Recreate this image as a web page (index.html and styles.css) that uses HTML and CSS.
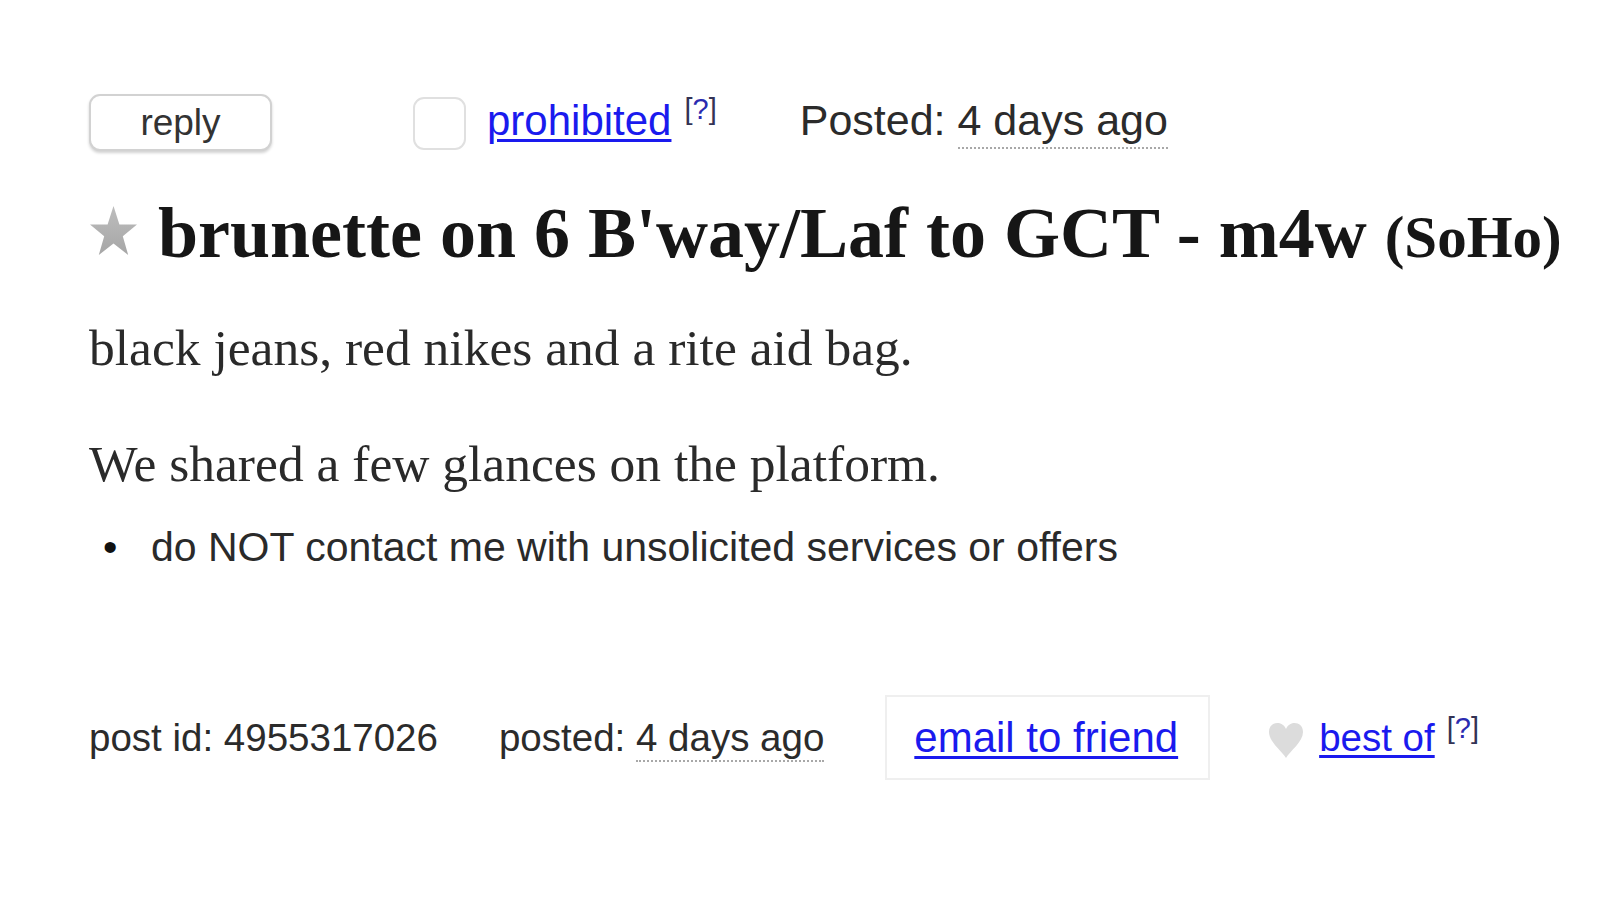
FILE: index.html
```html
<!DOCTYPE html>
<html lang="en">
<head>
<meta charset="utf-8">
<title>brunette on 6 B'way/Laf to GCT - m4w (SoHo)</title>
<link rel="stylesheet" href="styles.css">
</head>
<body>
<div class="page">
  <div class="topbar">
    <button class="reply-btn">reply</button>
    <span class="flagbox"></span>
    <a class="prohibited" href="#">prohibited</a>
    <sup class="help">[<a href="#">?</a>]</sup>
    <span class="posted">Posted: <time class="ago">4 days ago</time></span>
  </div>

  <div class="title-row">
    <svg class="star" viewBox="0 0 49 56" width="49" height="56" aria-hidden="true">
      <defs>
        <linearGradient id="sg" x1="0" y1="0" x2="0" y2="1">
          <stop offset="0" stop-color="#bdbdbd"/>
          <stop offset="1" stop-color="#a6a6a6"/>
        </linearGradient>
      </defs>
      <polygon points="24.5,2 30.4,20.6 48,20.6 33.8,32.3 39.2,51 24.5,39.6 9.8,51 15.2,32.3 1,20.6 18.6,20.6" fill="url(#sg)"/>
    </svg>
    <h1 class="title">brunette on 6 B'way/Laf to GCT - m4w <small class="area">(SoHo)</small></h1>
  </div>

  <section class="body">
    <p class="para first">black jeans, red nikes and a rite aid bag.</p>
    <p class="para second">We shared a few glances on the platform.</p>
  </section>

  <ul class="notices">
    <li>do NOT contact me with unsolicited services or offers</li>
  </ul>

  <div class="footer">
    <span class="postid">post id: 4955317026</span>
    <span class="fposted">posted: <time class="ago small">4 days ago</time></span>
    <span class="emailbox"><a href="#">email to friend</a></span>
    <svg class="heart" viewBox="0 0 36 37" width="36" height="37" aria-hidden="true">
      <path d="M18 36 C14 29 1 20 1 10 C1 4 5 1 9.5 1 C13.5 1 16.5 3.5 18 7 C19.5 3.5 22.5 1 26.5 1 C31 1 35 4 35 10 C35 20 22 29 18 36 Z" fill="#dcdcdc"/>
    </svg>
    <a class="bestof" href="#">best of</a>
    <sup class="help help2">[<a href="#">?</a>]</sup>
  </div>
</div>
</body>
</html>
```

FILE: styles.css
```css
html, body {
  margin: 0;
  padding: 0;
  background: #ffffff;
}

.page {
  padding: 94px 0 0 89px;
  font-family: "Liberation Sans", Arial, sans-serif;
  color: #222;
}

a {
  color: #1a1aee;
}

/* ---------- top bar ---------- */
.topbar {
  display: flex;
  align-items: flex-start;
  height: 57px;
  white-space: nowrap;
}

.reply-btn {
  box-sizing: border-box;
  width: 183px;
  height: 57px;
  margin: 0;
  padding: 0;
  background: #fff;
  border: 2px solid #d2d2d2;
  border-radius: 11px;
  box-shadow: 0 2px 3px rgba(0, 0, 0, 0.18);
  font-family: "Liberation Sans", Arial, sans-serif;
  font-size: 37px;
  line-height: 51px;
  color: #333;
}

.flagbox {
  box-sizing: border-box;
  width: 53px;
  height: 53px;
  margin: 3px 0 0 141px;
  border: 2px solid #e0e0e0;
  border-radius: 11px;
}

.prohibited {
  margin: 6px 0 0 21px;
  font-size: 42px;
  line-height: 42px;
  text-decoration-thickness: 3px;
  text-underline-offset: 4px;
}

.help {
  margin: 1px 0 0 13px;
  font-size: 29px;
  line-height: 29px;
  vertical-align: baseline;
  color: #335;
}

.help a {
  color: #2a2ab0;
  text-decoration: none;
}

.posted {
  margin: 5px 0 0 83px;
  font-size: 43px;
  line-height: 43px;
  color: #2b2b2b;
}

.ago {
  border-bottom: 2px dotted #a8a8a8;
  padding-bottom: 3px;
}

/* ---------- title ---------- */
.title-row {
  display: flex;
  align-items: flex-start;
  margin-top: 46px;
  white-space: nowrap;
}

.star {
  display: block;
  flex: none;
  margin-top: 7px;
}

.title {
  margin: 0 0 0 20px;
  font-family: "Liberation Serif", "Times New Roman", serif;
  font-weight: bold;
  font-size: 72px;
  line-height: 72px;
  color: #161616;
}

.area {
  font-size: 59px;
}

/* ---------- body ---------- */
.body {
  font-family: "Liberation Serif", "Times New Roman", serif;
  font-size: 51.5px;
  line-height: 51px;
  color: #2a2a2a;
}

.para {
  margin: 0;
  white-space: nowrap;
}

.para.first {
  margin-top: 49px;
}

.para.second {
  margin-top: 65px;
}

.notices {
  list-style: none;
  margin: 38px 0 0 0;
  padding: 0 0 0 62px;
  font-size: 41px;
  line-height: 41px;
  color: #2a2a2a;
}

.notices li::before {
  content: "\2022";
  display: inline-block;
  width: 62px;
  margin-left: -62px;
  text-indent: 14px;
  color: #111;
}

/* ---------- footer ---------- */
.footer {
  display: flex;
  align-items: center;
  height: 85px;
  margin-top: 127px;
  white-space: nowrap;
  font-size: 38.5px;
  line-height: 39px;
  color: #2b2b2b;
}

.fposted {
  margin-left: 61px;
}

.ago.small {
  padding-bottom: 1px;
}

.emailbox {
  box-sizing: border-box;
  display: flex;
  align-items: center;
  height: 85px;
  margin-left: 61px;
  padding: 0 30px 0 27px;
  border: 2px solid #efefef;
  font-size: 42px;
  line-height: 42px;
}

.emailbox a {
  text-decoration-thickness: 3px;
  text-underline-offset: 4px;
}

.heart {
  display: block;
  flex: none;
  margin: 6px 0 0 58px;
}

.bestof {
  margin-left: 15px;
  text-decoration-thickness: 3px;
  text-underline-offset: 4px;
}

.help2 {
  align-self: flex-start;
  margin: 19px 0 0 12px;
}
```
